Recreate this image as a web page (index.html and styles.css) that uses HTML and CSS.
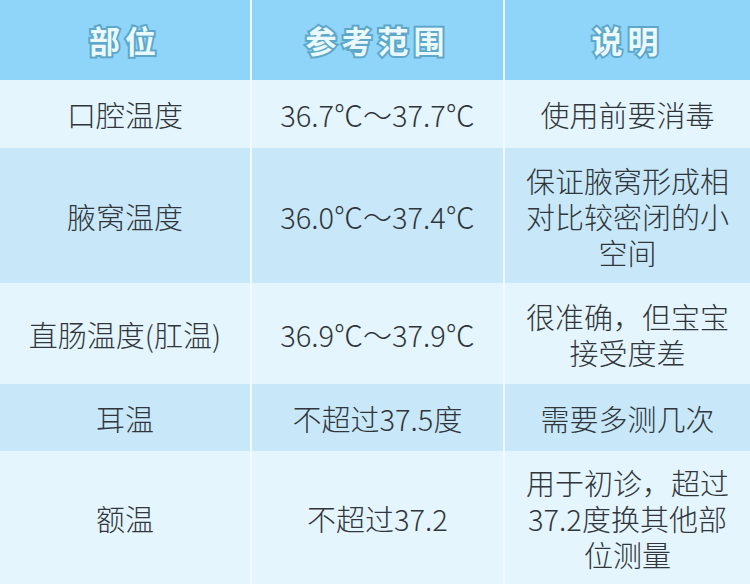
FILE: index.html
```html
<!DOCTYPE html>
<html lang="zh-CN">
<head>
<meta charset="utf-8">
<title>体温参考范围</title>
<link rel="stylesheet" href="styles.css">
</head>
<body>
<div class="table">
  <div class="cell head">部位</div>
  <div class="cell head">参考范围</div>
  <div class="cell head">说明</div>

  <div class="cell light">口腔温度</div>
  <div class="cell light">36.7℃～37.7℃</div>
  <div class="cell light">使用前要消毒</div>

  <div class="cell dark">腋窝温度</div>
  <div class="cell dark">36.0℃～37.4℃</div>
  <div class="cell dark">保证腋窝形成相对比较密闭的小空间</div>

  <div class="cell light">直肠温度(肛温)</div>
  <div class="cell light">36.9℃～37.9℃</div>
  <div class="cell light">很准确，但宝宝接受度差</div>

  <div class="cell dark">耳温</div>
  <div class="cell dark">不超过37.5度</div>
  <div class="cell dark">需要多测几次</div>

  <div class="cell light">额温</div>
  <div class="cell light">不超过37.2</div>
  <div class="cell light">用于初诊，超过37.2度换其他部位测量</div>
</div>
</body>
</html>
```

FILE: styles.css
```css
html, body {
  margin: 0;
  padding: 0;
  background: #f4fbff;
}

.table {
  width: 750px;
  height: 584px;
  display: grid;
  grid-template-columns: 250px 251px 1fr;
  grid-template-rows: 80px 68px 135px 101px 67px 133px;
  column-gap: 2px;
  background: #f2faff;
  font-family: "Noto Sans CJK SC", "Noto Sans", sans-serif;
  color: #30363b;
}

.cell {
  display: flex;
  align-items: center;
  justify-content: center;
  text-align: center;
  font-size: 29px;
  font-weight: 300;
  line-height: 36px;
  padding: 0 12px;
}

.head {
  background: #8fd4f9;
  color: #e9f9fe;
  font-size: 31px;
  font-weight: 700;
  letter-spacing: 5px;
  -webkit-text-stroke: 4px #5ea7c8;
  paint-order: stroke fill;
}

.light {
  background: #e4f5fd;
}

.dark {
  background: #c8e8f9;
}
```
